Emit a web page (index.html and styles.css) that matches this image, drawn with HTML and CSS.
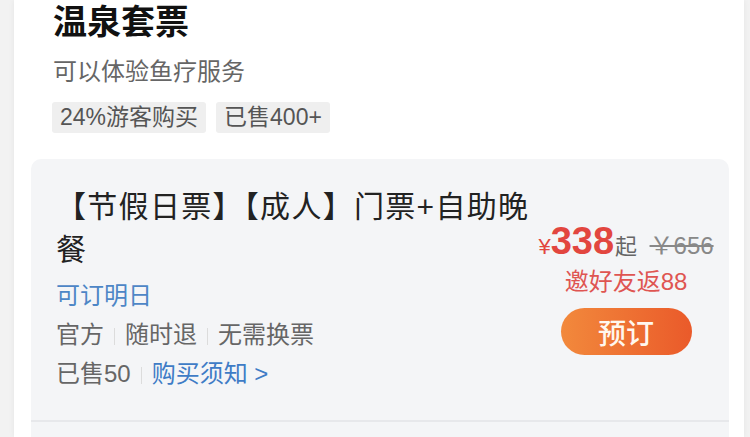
FILE: index.html
```html
<!DOCTYPE html>
<html lang="zh-CN">
<head>
  <meta charset="UTF-8" />
  <meta name="viewport" content="width=device-width, initial-scale=1.0"/>
  <title>温泉套票</title>
  <link rel="stylesheet" href="styles.css">
</head>
<body>

  <div class="sheet">
    <div class="pkg-head">
      <h1>温泉套票</h1>
      <p class="pkg-desc">可以体验鱼疗服务</p>
      <div class="pkg-tags">
        <span class="tag">24%游客购买</span>
        <span class="tag">已售400+</span>
      </div>
    </div>

    <div class="ticket-list">
      <div class="ticket">
        <div class="ticket-info">
          <div class="ticket-name">【节假日票】【成人】门票+自助晚餐</div>
          <div class="ticket-line avail">可订明日</div>
          <div class="ticket-line">官方<span class="sep"></span>随时退<span class="sep"></span>无需换票</div>
          <div class="ticket-line">已售50<span class="sep"></span><a class="notice" href="#">购买须知 &gt;</a></div>
        </div>
        <div class="ticket-buy">
          <div class="price-row">
            <span class="yen">¥</span><span class="price">338</span><span class="from">起</span>
            <span class="orig">￥656</span>
          </div>
          <div class="promo">邀好友返88</div>
          <button class="btn-book">预订</button>
        </div>
      </div>
      <div class="ticket next"></div>
    </div>
  </div>

</body>
</html>
```

FILE: styles.css
```css
html, body {
  height: 100%;
}

body {
  margin: 0;
  background: #f2f2f2;
  font-family: "Liberation Sans", "Noto Sans CJK SC", sans-serif;
  color: #222;
  overflow: hidden;
}

.sheet {
  background: white;
  margin: 0 6px 0 14px;
  padding: 0 15px 0 17px;
  height: 100%;
  overflow: hidden;
  box-shadow: 0 0 6px rgba(0,0,0,0.06);
}

.pkg-head {
  padding: 2px 0 0 22px;
}

.pkg-head h1 {
  margin: 0;
  font-size: 34px;
  line-height: 40px;
  font-weight: bold;
  color: #111;
}

.pkg-desc {
  margin: 14px 0 0;
  font-size: 24px;
  line-height: 32px;
  color: #666;
}

.pkg-tags {
  display: flex;
  gap: 10px;
  margin-top: 14px;
  margin-left: -1px;
}

.tag {
  background: #efefef;
  color: #555;
  font-size: 23px;
  line-height: 31px;
  padding: 0 8px;
  border-radius: 3px;
}

.ticket-list {
  margin-top: 26px;
  background: #f4f5f7;
  border-radius: 10px 10px 0 0;
}

.ticket {
  display: flex;
  align-items: center;
  padding: 26px 13px 27px 25px;
  border-bottom: 2px solid #e7e8eb;
}

.ticket.next {
  border-bottom: none;
  height: 40px;
}

.ticket-info {
  flex: 1;
  min-width: 0;
}

.ticket-name {
  font-size: 30px;
  line-height: 43px;
  letter-spacing: 1.3px;
  color: #222;
  margin-bottom: 5px;
}

.ticket-line {
  font-size: 24px;
  line-height: 39px;
  color: #666;
}

.ticket-line.avail {
  color: #4d86c6;
}

.sep {
  display: inline-block;
  width: 1px;
  height: 17px;
  background: #dcdcdc;
  margin: 0 10px;
  vertical-align: -2px;
}

.notice {
  color: #3f7cc6;
  text-decoration: none;
}

.ticket-buy {
  width: 180px;
  display: flex;
  flex-direction: column;
  align-items: center;
}

.price-row {
  line-height: 36px;
  white-space: nowrap;
}

.yen {
  color: #e2463f;
  font-size: 22px;
}

.price {
  color: #e2463f;
  font-size: 38px;
  font-weight: bold;
}

.from {
  color: #666;
  font-size: 22px;
  margin-left: 1px;
}

.orig {
  color: #888;
  font-size: 24px;
  margin-left: 8px;
  text-decoration: line-through;
}

.promo {
  color: #df5552;
  font-size: 24px;
  line-height: 30px;
}

.btn-book {
  margin-top: 11px;
  width: 131px;
  height: 47px;
  border: none;
  border-radius: 24px;
  background: linear-gradient(90deg, #f2893c, #ea5a2a);
  color: #fff7ee;
  font-family: inherit;
  font-size: 28px;
  font-weight: 500;
  cursor: pointer;
}
```
